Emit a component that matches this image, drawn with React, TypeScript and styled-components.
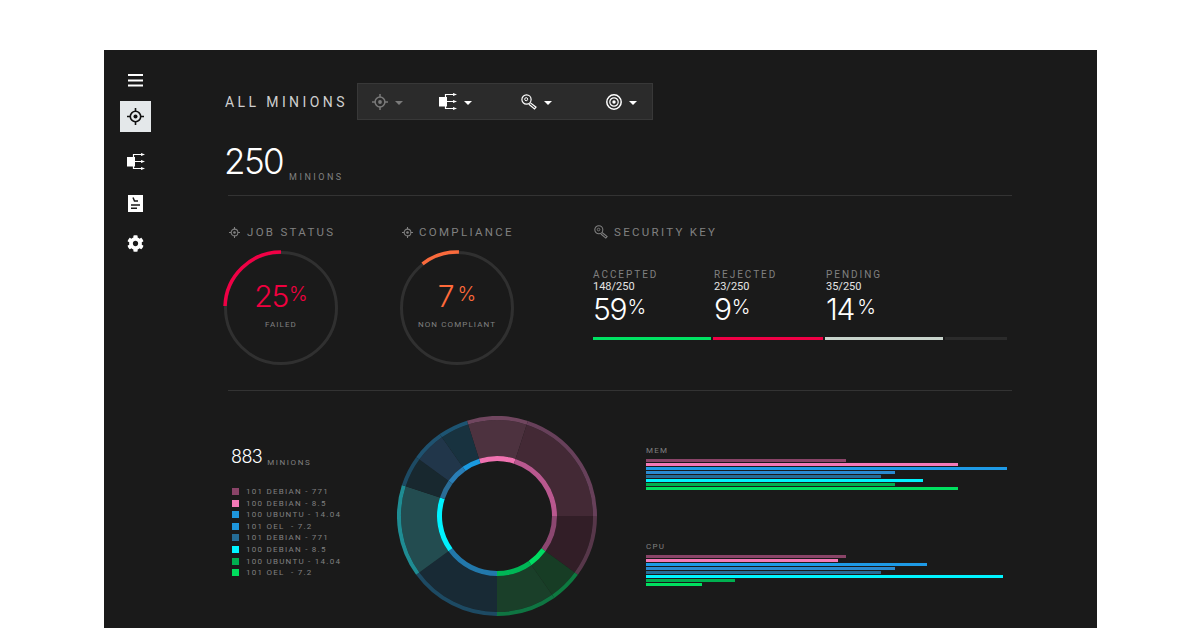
import React from 'react';
import styled, { createGlobalStyle } from 'styled-components';
import { FaCog } from 'react-icons/fa';

const GlobalStyle = createGlobalStyle`
  html, body {
    margin: 0;
    padding: 0;
    height: 628px;
    overflow: hidden;
    background: #fff;
    font-family: Roboto, "Liberation Sans", sans-serif;
  }
  * { box-sizing: border-box; }
`;

const Panel = styled.div`
  display: flex;
  width: 993px;
  height: 578px;
  margin: 50px 0 0 104px;
  background: #1a1a1a;
  overflow: hidden;
`;

const Sidebar = styled.nav`
  display: flex;
  flex-direction: column;
  flex: none;
  width: 121px;
  padding: 15px 0 0 16px;
  color: #fff;
`;

const NavButton = styled.div<{ $mt?: number; $active?: boolean }>`
  display: flex;
  align-items: center;
  justify-content: center;
  width: 31px;
  height: 31px;
  margin-top: ${p => p.$mt ?? 0}px;
  background: ${p => (p.$active ? '#e4e8ea' : 'transparent')};
  color: ${p => (p.$active ? '#111' : '#fff')};
`;

const Main = styled.main`
  flex: 1;
  display: flex;
  flex-direction: column;
  padding-right: 85px;
`;

const Header = styled.header`
  display: flex;
  align-items: center;
  height: 37px;
  margin-top: 33px;
`;

const Title = styled.h1`
  width: 132px;
  margin: 0;
  font-size: 14px;
  font-weight: 400;
  letter-spacing: 3.4px;
  color: #cfcfcf;
  white-space: nowrap;
`;

const Toolbar = styled.div`
  display: flex;
  align-items: center;
  width: 296px;
  height: 37px;
  padding-left: 14px;
  background: #2b2b2b;
  border: 1px solid #383838;
`;

const ToolItem = styled.div<{ $w: number; $dim?: boolean }>`
  display: flex;
  align-items: center;
  gap: 7px;
  width: ${p => p.$w}px;
  color: ${p => (p.$dim ? '#7a7a7a' : '#fff')};
`;

const Caret = styled.span`
  width: 0;
  height: 0;
  margin-top: 2px;
  border-left: 4px solid transparent;
  border-right: 4px solid transparent;
  border-top: 4px solid currentColor;
`;

const TotalRow = styled.div`
  display: flex;
  align-items: flex-end;
  height: 75px;
  padding: 17px 0 10px;
`;

const TotalValue = styled.span`
  margin-left: -1px;
  font-family: Inter, Roboto, sans-serif;
  font-size: 35px;
  font-weight: 300;
  letter-spacing: -1.6px;
  line-height: 48px;
  color: #fff;
`;

const UnitLabel = styled.span<{ $size: number; $ml: number; $mb: number; $ls: number }>`
  margin: 0 0 ${p => p.$mb}px ${p => p.$ml}px;
  font-family: Roboto, sans-serif;
  font-size: ${p => p.$size}px;
  font-weight: 400;
  letter-spacing: ${p => p.$ls}px;
  color: #808080;
`;

const Divider = styled.hr`
  width: 784px;
  height: 1px;
  margin: 0 0 0 3px;
  border: 0;
  background: #333;
`;

const StatusRow = styled.section`
  display: flex;
  height: 194px;
  padding-top: 29px;
`;

const StatusColumn = styled.div<{ $w: number }>`
  width: ${p => p.$w}px;
  flex: none;
`;

const SectionHeading = styled.h2<{ $pl: number; $gap: number }>`
  display: flex;
  align-items: center;
  gap: ${p => p.$gap}px;
  height: 14px;
  margin: 0;
  padding-left: ${p => p.$pl}px;
  font-size: 11.5px;
  font-weight: 400;
  letter-spacing: 2.3px;
  color: #808080;
  white-space: nowrap;
`;

const Gauge = styled.div`
  position: relative;
  width: 116px;
  height: 116px;
  margin: 11px 0 0 -2px;
`;

const GaugeCentre = styled.div<{ $color: string }>`
  position: absolute;
  inset: 0;
  display: flex;
  flex-direction: column;
  align-items: center;
  padding-top: 26px;
  color: ${p => p.$color};
`;

const Percent = styled.div`
  font-family: Inter, Roboto, sans-serif;
  font-size: 30px;
  font-weight: 300;
  letter-spacing: -1.2px;
  line-height: 36px;
`;

const PercentSign = styled.span<{ $ml?: number }>`
  margin-left: ${p => p.$ml ?? 1}px;
  font-size: 20px;
  font-weight: 300;
  letter-spacing: 0;
  vertical-align: 6px;
`;

const GaugeCaption = styled.div`
  margin-top: 5px;
  font-size: 8px;
  letter-spacing: 1.1px;
  line-height: 12px;
  color: #808080;
  white-space: nowrap;
`;

const KeyStats = styled.div`
  display: flex;
  margin-top: 30px;
`;

const KeyStat = styled.div<{ $w: number }>`
  width: ${p => p.$w}px;
`;

const KeyLabel = styled.div`
  font-size: 10px;
  line-height: 12px;
  letter-spacing: 1.95px;
  color: #808080;
`;

const KeyCount = styled.div`
  font-size: 11px;
  line-height: 12px;
  color: #e4e4e4;
`;

const KeyPercent = styled.div`
  font-family: Inter, Roboto, sans-serif;
  font-size: 30px;
  font-weight: 300;
  letter-spacing: -1.2px;
  line-height: 28px;
  color: #fff;
`;

const KeyBar = styled.div`
  display: flex;
  gap: 2px;
  width: 414px;
  margin-top: 14px;
`;

const KeySegment = styled.div<{ $w: number; $color: string }>`
  width: ${p => p.$w}px;
  height: 3px;
  background: ${p => p.$color};
`;

const BottomRow = styled.section`
  display: flex;
  height: 237px;
`;

const LegendColumn = styled.div`
  width: 172px;
  flex: none;
  padding: 54px 0 0 6px;
`;

const LegendTotal = styled.div`
  display: flex;
  align-items: flex-end;
  height: 22px;
  font-family: Inter, Roboto, sans-serif;
  font-size: 18px;
  font-weight: 300;
  letter-spacing: -0.6px;
  color: #fff;
`;

const LegendList = styled.ul`
  margin: 19px 0 0;
  padding: 0 0 0 1px;
  list-style: none;
`;

const LegendRow = styled.li`
  display: flex;
  align-items: center;
  height: 11.55px;
  font-size: 8px;
  letter-spacing: 1.25px;
  color: #808080;
  white-space: pre;
`;

const Swatch = styled.span<{ $color: string }>`
  width: 7px;
  height: 7px;
  margin-right: 7px;
  background: ${p => p.$color};
`;

const DonutWrap = styled.div`
  flex: none;
  width: 200px;
  margin-top: 25px;
`;

const BarsColumn = styled.div`
  display: flex;
  flex-direction: column;
  gap: 40px;
  margin-left: 49px;
  padding-top: 54px;
`;

const BarGroup = styled.div`
  display: flex;
  flex-direction: column;
  height: 56px;
`;

const BarTitle = styled.div`
  height: 14px;
  font-size: 8px;
  line-height: 12px;
  letter-spacing: 1.2px;
  color: #808080;
`;

const Bar = styled.div<{ $w: number; $color: string }>`
  width: ${p => p.$w}px;
  height: 3px;
  margin-bottom: 1px;
  background: ${p => p.$color};
`;

const Crosshair = ({ size }: { size: number }) => (
  <svg width={size} height={size} viewBox="0 0 16 16" fill="none" stroke="currentColor">
    <circle cx="8" cy="8" r="4.9" strokeWidth="1.5" />
    <circle cx="8" cy="8" r="1.9" fill="currentColor" stroke="none" />
    <path d="M8 0v3.2M8 12.8V16M0 8h3.2M12.8 8H16" strokeWidth="1.5" />
  </svg>
);

const Fanout = () => (
  <svg width="18" height="17" viewBox="0 0 18 17" fill="none" stroke="currentColor">
    <path d="M0 4h8v9.5H0z" fill="currentColor" stroke="none" />
    <path d="M6.5 4V1.5h8M6.5 13v2.5h8M8 8.5h6.5" strokeWidth="1.2" />
    <path d="M14 0l4 1.5-4 1.5zM14 7l4 1.5-4 1.5zM14 14l4 1.5-4 1.5z" fill="currentColor" stroke="none" />
  </svg>
);

const KeyIcon = ({ size }: { size: number }) => (
  <svg width={size} height={size} viewBox="0 0 16 16" fill="none" stroke="currentColor">
    <circle cx="5.5" cy="5.5" r="4.6" strokeWidth="1.2" />
    <circle cx="5.2" cy="5.2" r="1.5" strokeWidth="1" />
    <path d="M9.2 8.6l5.8 4.6-1.5 1.8-5.6-4.7" strokeWidth="1.2" />
  </svg>
);

const TargetIcon = () => (
  <svg width="16" height="16" viewBox="0 0 16 16" fill="none" stroke="currentColor">
    <circle cx="8" cy="8" r="7.2" strokeWidth="1.5" />
    <circle cx="8" cy="8" r="4.2" strokeWidth="1.2" />
    <circle cx="8" cy="8" r="1.7" fill="currentColor" stroke="none" />
  </svg>
);

const Hamburger = () => (
  <svg width="15" height="13" viewBox="0 0 15 13" fill="currentColor">
    <path d="M0 0h15v2H0zM0 5.5h15v2H0zM0 10.5h15v2H0z" />
  </svg>
);

const DocIcon = () => (
  <svg width="15" height="17" viewBox="0 0 15 17">
    <path d="M0 0h15v17H0z" fill="currentColor" />
    <path d="M5 2.5L6.5 6H10M3 10h9M3 13.2h6" fill="none" stroke="#1a1a1a" strokeWidth="1.5" />
  </svg>
);

const polar = (r: number, deg: number) => {
  const a = ((deg - 90) * Math.PI) / 180;
  return [100 + r * Math.cos(a), 100 + r * Math.sin(a)];
};

const sector = (r0: number, r1: number, from: number, to: number) => {
  const [x0, y0] = polar(r1, from);
  const [x1, y1] = polar(r1, to);
  const [x2, y2] = polar(r0, to);
  const [x3, y3] = polar(r0, from);
  return `M${x0} ${y0}A${r1} ${r1} 0 0 1 ${x1} ${y1}L${x2} ${y2}A${r0} ${r0} 0 0 0 ${x3} ${y3}Z`;
};

const gaugeArc = (r: number, from: number, to: number) => {
  const a = ((from - 90) * Math.PI) / 180;
  const b = ((to - 90) * Math.PI) / 180;
  return `M${58 + r * Math.cos(a)} ${58 + r * Math.sin(a)}A${r} ${r} 0 0 1 ${58 + r * Math.cos(b)} ${58 + r * Math.sin(b)}`;
};

const segments = [
  { from: -17.5, to: 18, fill: '#4d323f', band: '#70465f', inner: '#ef72b0' },
  { from: 18, to: 90, fill: '#432935', band: '#67405a', inner: '#b9588f' },
  { from: 90, to: 126, fill: '#321e27', band: '#57374a', inner: '#8c4770' },
  { from: 126, to: 145, fill: '#173d25', band: '#0d7a40', inner: '#00dc62' },
  { from: 145, to: 180, fill: '#1a3f29', band: '#0f7542', inner: '#00b656' },
  { from: 180, to: 234, fill: '#182a35', band: '#1d4a63', inner: '#2278ab' },
  { from: 234, to: 288, fill: '#234c50', band: '#1f8c93', inner: '#00f2ff' },
  { from: 288, to: 306, fill: '#18282f', band: '#1d4a63', inner: '#2a6d96' },
  { from: 306, to: 325, fill: '#21364a', band: '#1f5270', inner: '#2a7db5' },
  { from: 325, to: 342.5, fill: '#18323f', band: '#1d5472', inner: '#1a9ae0' },
];

const legend = [
  ['#8a4468', '101 DEBIAN - 771'],
  ['#f57ab8', '100 DEBIAN - 8.5'],
  ['#1e96dc', '100 UBUNTU - 14.04'],
  ['#1e96dc', '101 OEL  - 7.2'],
  ['#256c96', '101 DEBIAN - 771'],
  ['#00f4ff', '100 DEBIAN - 8.5'],
  ['#00b050', '100 UBUNTU - 14.04'],
  ['#00dc5c', '101 OEL  - 7.2'],
];

const barColors = ['#8a4468', '#f57ab8', '#1e9ae6', '#2a8ad0', '#256c96', '#00f4ff', '#00b050', '#00e060'];
const memBars = [200, 312, 361, 249, 235, 277, 249, 312];
const cpuBars = [200, 192, 281, 249, 235, 357, 89, 56];

const GaugeRing = ({ from, to, color }: { from: number; to: number; color: string }) => (
  <svg width="116" height="116" viewBox="0 0 116 116" fill="none">
    <circle cx="58" cy="58" r="55.5" stroke="#303030" strokeWidth="3" />
    <path d={gaugeArc(56, from, to)} stroke={color} strokeWidth="3.5" />
  </svg>
);

const App: React.FC = () => (
  <>
    <GlobalStyle />
    <Panel>
      <Sidebar>
        <NavButton><Hamburger /></NavButton>
        <NavButton $active $mt={5}><Crosshair size={17} /></NavButton>
        <NavButton $mt={14}><Fanout /></NavButton>
        <NavButton $mt={11}><DocIcon /></NavButton>
        <NavButton $mt={9}><FaCog size={17} /></NavButton>
      </Sidebar>
      <Main>
        <Header>
          <Title>ALL MINIONS</Title>
          <Toolbar>
            <ToolItem $w={67} $dim><Crosshair size={16} /><Caret /></ToolItem>
            <ToolItem $w={82}><Fanout /><Caret /></ToolItem>
            <ToolItem $w={85}><KeyIcon size={16} /><Caret /></ToolItem>
            <ToolItem $w={40}><TargetIcon /><Caret /></ToolItem>
          </Toolbar>
        </Header>
        <TotalRow>
          <TotalValue>250</TotalValue>
          <UnitLabel $size={9} $ml={6} $mb={3} $ls={2.5}>MINIONS</UnitLabel>
        </TotalRow>
        <Divider />
        <StatusRow>
          <StatusColumn $w={176}>
            <SectionHeading $pl={4} $gap={7}><Crosshair size={11} />JOB STATUS</SectionHeading>
            <Gauge>
              <GaugeRing from={-88} to={0} color="#f00045" />
              <GaugeCentre $color="#f0003f">
                <Percent>25<PercentSign>%</PercentSign></Percent>
                <GaugeCaption>FAILED</GaugeCaption>
              </GaugeCentre>
            </Gauge>
          </StatusColumn>
          <StatusColumn $w={192}>
            <SectionHeading $pl={1} $gap={6}><Crosshair size={11} />COMPLIANCE</SectionHeading>
            <Gauge>
              <GaugeRing from={-38} to={2} color="#fa6a3c" />
              <GaugeCentre $color="#ff6a3a">
                <Percent>7<PercentSign $ml={4}>%</PercentSign></Percent>
                <GaugeCaption>NON COMPLIANT</GaugeCaption>
              </GaugeCentre>
            </Gauge>
          </StatusColumn>
          <StatusColumn $w={420}>
            <SectionHeading $pl={1} $gap={6}><KeyIcon size={14} />SECURITY KEY</SectionHeading>
            <KeyStats>
              <KeyStat $w={121}>
                <KeyLabel>ACCEPTED</KeyLabel>
                <KeyCount>148/250</KeyCount>
                <KeyPercent>59<PercentSign>%</PercentSign></KeyPercent>
              </KeyStat>
              <KeyStat $w={112}>
                <KeyLabel>REJECTED</KeyLabel>
                <KeyCount>23/250</KeyCount>
                <KeyPercent>9<PercentSign>%</PercentSign></KeyPercent>
              </KeyStat>
              <KeyStat $w={112}>
                <KeyLabel>PENDING</KeyLabel>
                <KeyCount>35/250</KeyCount>
                <KeyPercent>14<PercentSign $ml={3}>%</PercentSign></KeyPercent>
              </KeyStat>
            </KeyStats>
            <KeyBar>
              <KeySegment $w={118} $color="#00e263" />
              <KeySegment $w={110} $color="#f00045" />
              <KeySegment $w={118} $color="#c8d4cc" />
              <KeySegment $w={62} $color="#2b2b2b" />
            </KeyBar>
          </StatusColumn>
        </StatusRow>
        <Divider />
        <BottomRow>
          <LegendColumn>
            <LegendTotal>
              883<UnitLabel $size={8} $ml={5} $mb={0} $ls={1.6}>MINIONS</UnitLabel>
            </LegendTotal>
            <LegendList>
              {legend.map(([color, label], i) => (
                <LegendRow key={i}><Swatch $color={color} />{label}</LegendRow>
              ))}
            </LegendList>
          </LegendColumn>
          <DonutWrap>
            <svg width="200" height="200" viewBox="0 0 200 200">
              {segments.map(s => (
                <g key={s.from}>
                  <path d={sector(60, 96, s.from, s.to)} fill={s.fill} />
                  <path d={sector(96, 100, s.from, s.to)} fill={s.band} />
                  <path d={sector(55, 60, s.from, s.to)} fill={s.inner} />
                </g>
              ))}
            </svg>
          </DonutWrap>
          <BarsColumn>
            <BarGroup>
              <BarTitle>MEM</BarTitle>
              {memBars.map((w, i) => <Bar key={i} $w={w} $color={barColors[i]} />)}
            </BarGroup>
            <BarGroup>
              <BarTitle>CPU</BarTitle>
              {cpuBars.map((w, i) => <Bar key={i} $w={w} $color={barColors[i]} />)}
            </BarGroup>
          </BarsColumn>
        </BottomRow>
      </Main>
    </Panel>
  </>
);

export default App;
